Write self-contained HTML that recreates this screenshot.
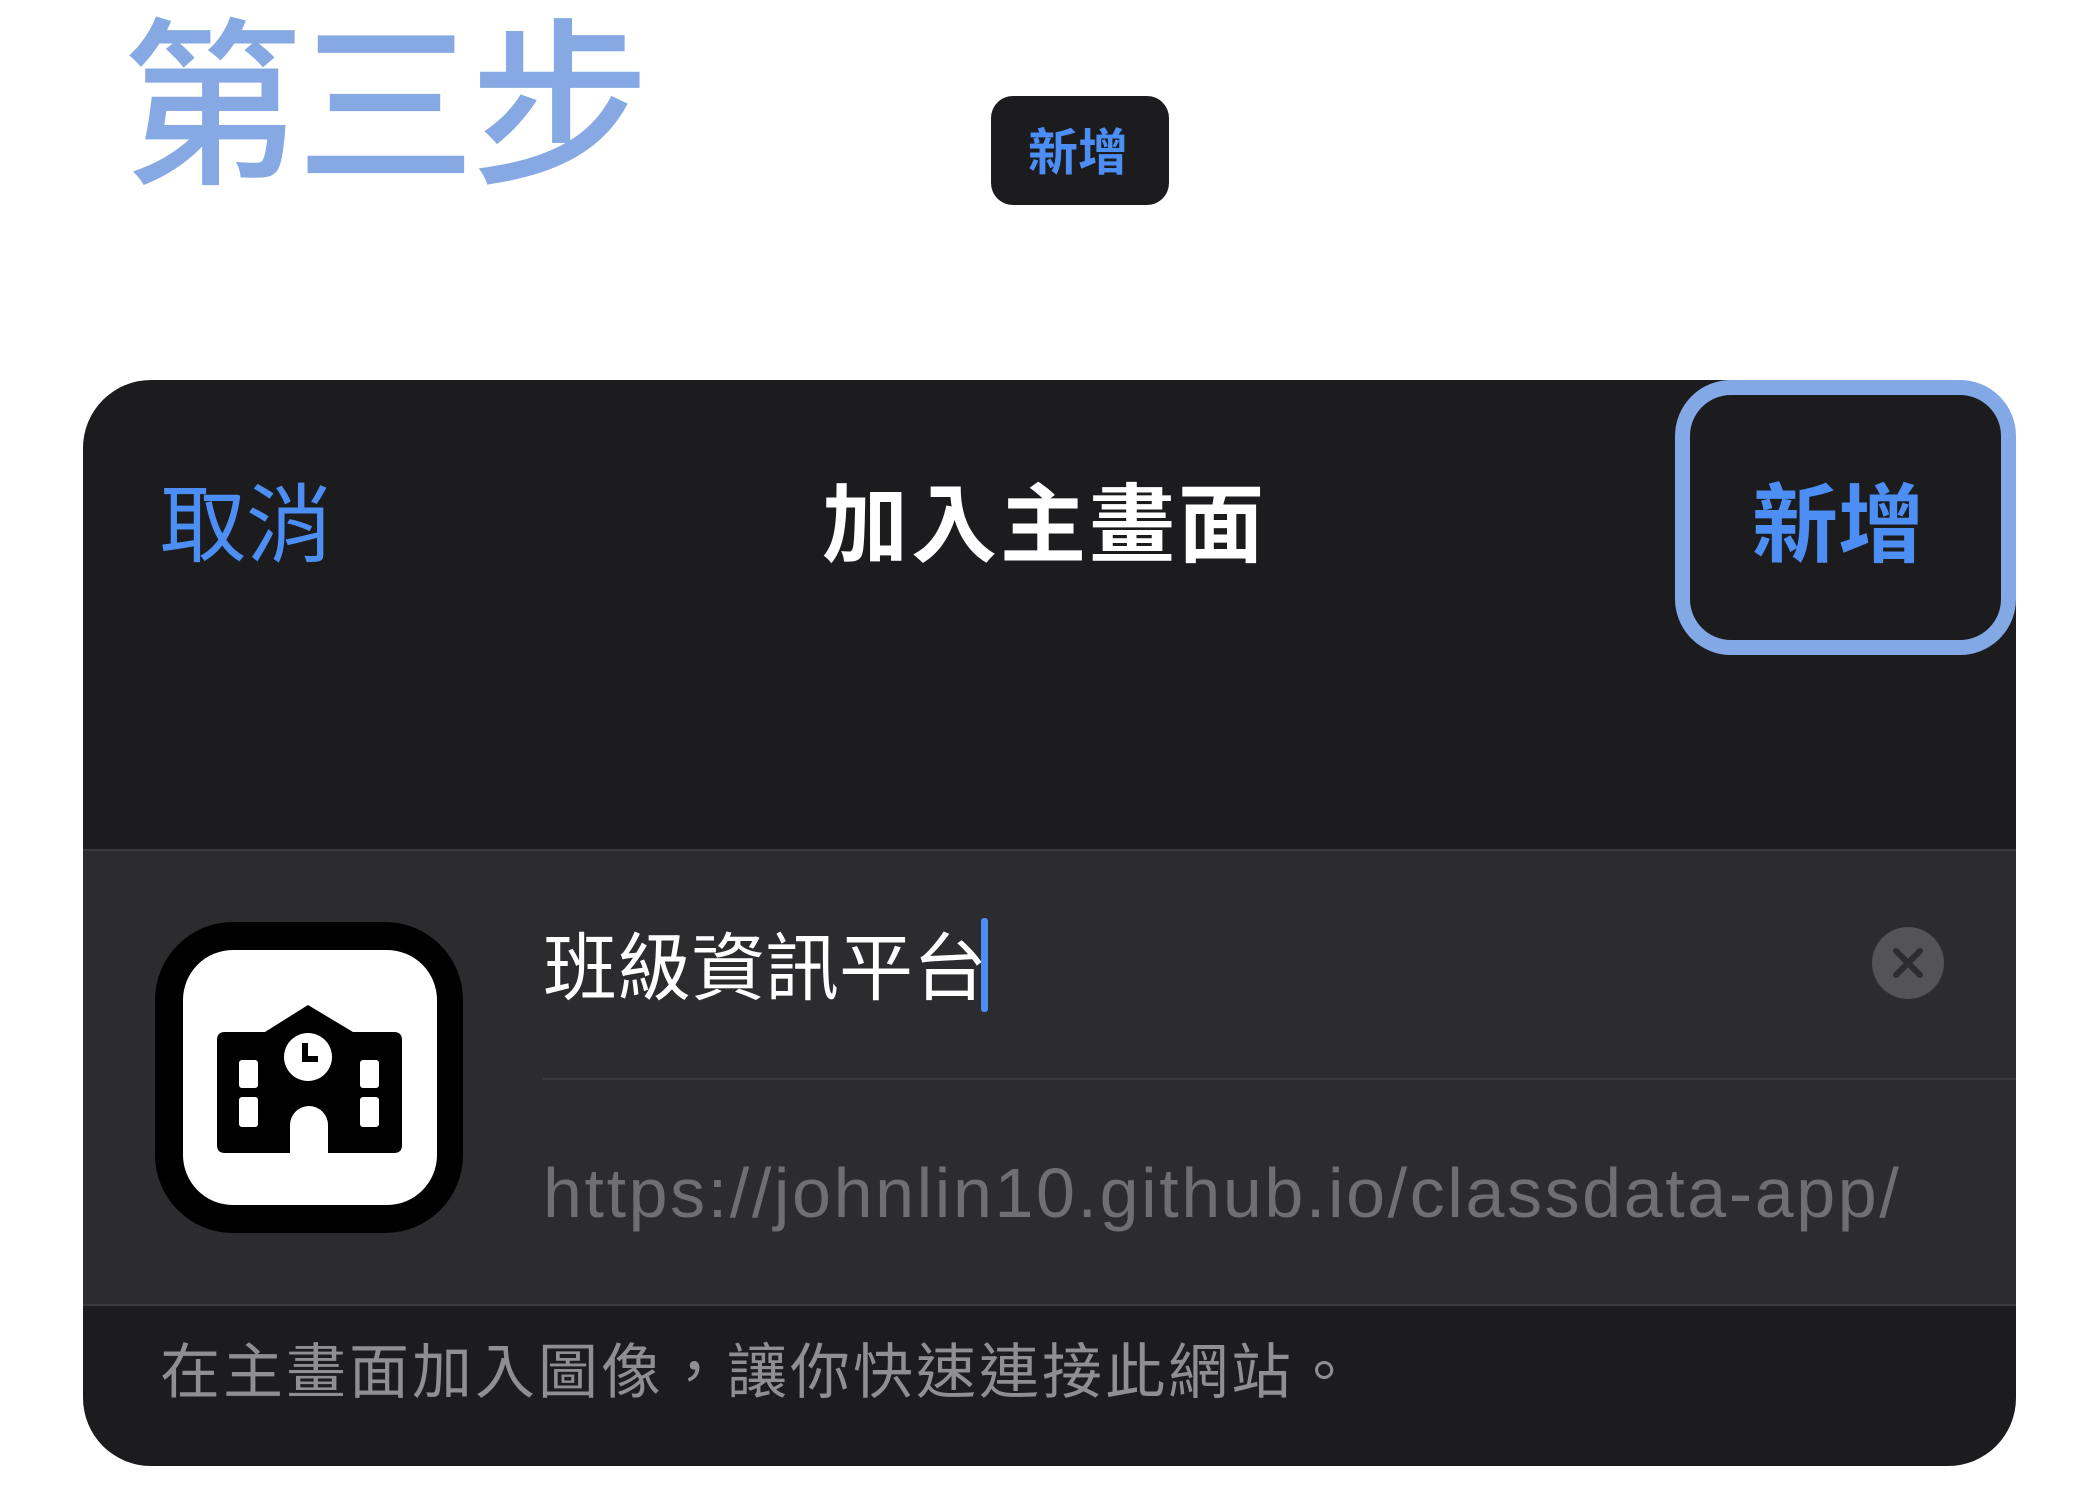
<!DOCTYPE html>
<html><head><meta charset="utf-8"><style>
*{margin:0;padding:0;box-sizing:border-box}
body{width:2100px;height:1500px;background:#fff;position:relative;overflow:hidden;font-family:"Liberation Sans","Noto Sans CJK TC",sans-serif}
.a{position:absolute;white-space:nowrap;line-height:1}
</style></head><body>
<div class="a" style="left:122px;top:2px;font-size:180px;color:#86a9e3;font-family:'Noto Sans CJK TC',sans-serif;font-weight:500;letter-spacing:-6px">第三步</div>
<div class="a" style="left:991px;top:96px;width:178px;height:109px;background:#1c1c1e;border-radius:22px"></div>
<div class="a" style="left:1028px;top:124px;font-size:50px;font-weight:700;color:#4d8ef5;font-family:'Noto Sans CJK TC',sans-serif">新增</div>

<div class="a" style="left:83px;top:380px;width:1933px;height:1086px;background:#1c1c1e;border-radius:68px;overflow:hidden">
  <div class="a" style="left:0;top:469px;width:100%;height:457px;background:#2c2c2e;border-top:2px solid #3a3a3c;border-bottom:2px solid #3a3a3c"></div>
  <div class="a" style="left:460px;top:698px;width:1473px;height:2px;background:#3a3a3c"></div>
</div>
<div class="a" style="left:160px;top:475px;font-size:86px;color:#4d8ef5;font-family:'Noto Sans CJK TC',sans-serif">取消</div>
<div class="a" style="left:822px;top:475px;font-size:86px;color:#fff;font-weight:700;letter-spacing:3px;font-family:'Noto Sans CJK TC',sans-serif">加入主畫面</div>
<div class="a" style="left:1675px;top:380px;width:341px;height:275px;border:15px solid #82a8e5;border-radius:56px"></div>
<div class="a" style="left:1752px;top:475px;font-size:86px;color:#4d8ef5;font-weight:700;font-family:'Noto Sans CJK TC',sans-serif">新增</div>

<svg class="a" style="left:155px;top:922px" width="310" height="312" viewBox="155 922 310 312">
  <rect x="155" y="922" width="308" height="311" rx="78" fill="#000"/>
  <rect x="183" y="950" width="254" height="255" rx="50" fill="#fff"/>
  <path d="M225 1032 H265 L308 1005 L353 1032 H394 Q402 1032 402 1040 V1145 Q402 1153 394 1153 H328 V1125 A19 19 0 0 0 290 1125 V1153 H225 Q217 1153 217 1145 V1040 Q217 1032 225 1032 Z" fill="#000"/>
  <circle cx="308" cy="1057" r="24" fill="#fff"/>
  <path d="M305 1043 V1059 H318" stroke="#000" stroke-width="6" fill="none"/>
  <rect x="239" y="1060" width="19" height="28" rx="3" fill="#fff"/>
  <rect x="239" y="1097" width="19" height="30" rx="3" fill="#fff"/>
  <rect x="360" y="1060" width="19" height="28" rx="3" fill="#fff"/>
  <rect x="360" y="1097" width="19" height="30" rx="3" fill="#fff"/>
</svg>

<div class="a" style="left:543px;top:926px;font-size:74px;color:#fff;font-family:'Noto Sans CJK TC',sans-serif">班級資訊平台</div>
<div class="a" style="left:981px;top:918px;width:7px;height:94px;background:#4d8ef5;border-radius:3px"></div>
<svg class="a" style="left:1871px;top:926px" width="74" height="74"><circle cx="37" cy="37" r="36" fill="#545458"/><path d="M25 25 L49 49 M49 25 L25 49" stroke="#2c2c2e" stroke-width="6" stroke-linecap="round"/></svg>
<div class="a" style="left:543px;top:1158px;font-size:70px;color:#6e6e73;letter-spacing:2.6px">https://johnlin10.github.io/classdata-app/</div>
<div class="a" style="left:160px;top:1338px;font-size:60px;color:#8e8e93;letter-spacing:3px;font-family:'Noto Sans CJK TC',sans-serif">在主畫面加入圖像，讓你快速連接此網站。</div>
</body></html>
